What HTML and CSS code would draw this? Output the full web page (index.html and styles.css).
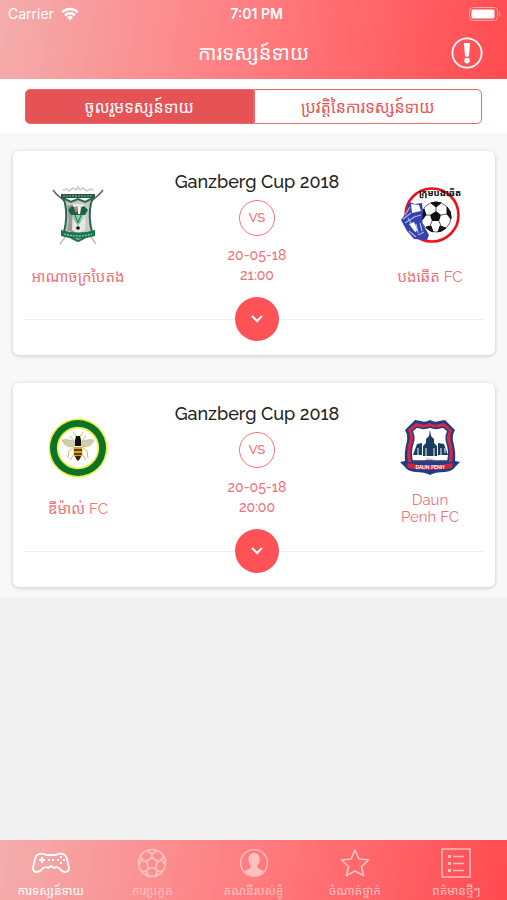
FILE: index.html
```
<!DOCTYPE html>
<html lang="km">
<head>
  <meta charset="UTF-8">
  <meta name="viewport" content="width=device-width, initial-scale=1.0">
  <title>ការទស្សន៍ទាយ</title>
  <link rel="stylesheet" href="styles.css">
</head>
<body>
  <header class="header">
    <div class="status-bar">
      <div class="status-left">
        <span>Carrier</span>
        <svg width="18" height="14" viewBox="0 0 18 14" fill="none" stroke="#fff" stroke-width="2.4">
          <path d="M1.2 5.2a11 11 0 0 1 15.6 0"/>
          <path d="M4 8.3a7 7 0 0 1 10 0"/>
          <path d="M9 13.4L6 10.3a4.3 4.3 0 0 1 6 0z" fill="#fff" stroke="none"/>
        </svg>
      </div>
      <span class="status-time">7:01 PM</span>
      <div class="status-right">
        <svg width="32" height="14" viewBox="0 0 32 14">
          <rect x="0.5" y="0.5" width="28" height="13" rx="3.5" fill="none" stroke="#fff" stroke-opacity="0.45"/>
          <rect x="2.5" y="2.5" width="23" height="9" rx="1.5" fill="#fff"/>
          <path d="M30 4.5a3 3 0 0 1 0 5z" fill="#fff" fill-opacity="0.5"/>
        </svg>
      </div>
    </div>
    <div class="title-bar">
      <h1>ការទស្សន៍ទាយ</h1>
      <button class="info-btn" aria-label="Info">
        <svg width="32" height="32" viewBox="0 0 32 32">
          <circle cx="16" cy="16" r="14.6" fill="none" stroke="#fff" stroke-width="1.8"/>
          <path d="M13 6h6l-1 13.5h-4z" fill="#fff"/>
          <circle cx="16" cy="23.6" r="2.8" fill="#fff"/>
        </svg>
      </button>
    </div>
  </header>

  <div class="segment-wrap">
    <div class="segment">
      <button class="segment-btn active">ចូលរួមទស្សន៍ទាយ</button>
      <button class="segment-btn">ប្រវត្តិនៃការទស្សន៍ទាយ</button>
    </div>
  </div>

  <main class="matches">
    <section class="card">
      <div class="match">
        <div class="team">
          <svg class="logo" viewBox="0 0 60 60">
            <path d="M5 4c4 6 8 8 13 12M55 4c-4 6-8 8-13 12" fill="none" stroke="#666" stroke-width="1.6"/>
            <path d="M18 50l-6 8M42 50l6 8" stroke="#bbb" stroke-width="1.3"/>
            <path d="M15 4l4-1 2 2 4-3 3 2 2-3 2 3 3-2 4 3 3-2 4 1" fill="none" stroke="#ccc" stroke-width="1.6"/>
            <path d="M15 12l2 5q3 14-1 29 8 7 14 9 6-2 14-9-4-15-1-29l2-5-8 4-7-3-7 3z" fill="#c8c8c8" stroke="#226b4c" stroke-width="2"/>
            <path d="M19 20q3 12 0 24l9 4V18z" fill="#999"/>
            <path d="M25 18h11q2 15 1 26l-7 4-6-4z" fill="#e6e6e6"/>
            <path d="M13 8h34v4H13z" fill="#27563f"/>
            <path d="M15 10h30" stroke="#8fb5a2" stroke-width="1" stroke-dasharray="2 1"/>
            <path d="M20 24l4-4 6 3 6-3 4 4-3 5H23z" fill="#176343"/>
            <path d="M24 29h12l-2 5-4 6-4-6z" fill="#8bc9aa"/>
            <path d="M27 29l3 8 3-8" fill="none" stroke="#217750"/>
            <path d="M26 22l3-2 2 3-3 4z" fill="#d77878"/>
            <path d="M30 20l3 2-1 6h-2z" fill="#fff"/>
            <circle cx="30" cy="42" r="1.8" fill="#111"/>
            <path d="M13 44q17 5 34 0v6q-17 5-34 0z" fill="#15754d"/>
            <path d="M16 48q14 4 28 0" fill="none" stroke="#9ec4b1" stroke-width="1.3" stroke-dasharray="2 1"/>
          </svg>
          <p class="team-name">អាណាចក្របៃតង</p>
        </div>
        <div class="info">
          <h2>Ganzberg Cup 2018</h2>
          <span class="vs">VS</span>
          <p class="date">20-05-18<br>21:00</p>
        </div>
        <div class="team">
          <svg class="logo" viewBox="0 0 60 60">
            <circle cx="32" cy="29" r="26.5" fill="#fff" stroke="#e8141c" stroke-width="2.6"/>
            <circle cx="36" cy="31" r="15" fill="#fff" stroke="#555" stroke-width="0.9"/>
            <path d="M36 25l5 4-2 6h-7l-2-6z" fill="#111"/>
            <path d="M31 17q5-2 10 0l-5 4zM47 21q5 5 4 12l-4-5zM46 42q-3 3-8 4l2-6zM33 46q-4-1-7-5l5-1zM22 34q-1-5 2-11l2 6z" fill="#111" stroke="#111"/>
            <path d="M36 21v4M41 29l6-1M39 35l2 5M32 35l-2 5M30 29h-4" stroke="#444" stroke-width="0.9"/>
            <path d="M9 16l6 2 7-1 1 9-1 11 7 12-2 5-13-1-7-8-6-11 5-7z" fill="#3542ad"/>
            <path d="M11 18l8 1 2 6-9 2zM9 38l5-2 4 8-3 2z" fill="#fff"/>
            <path d="M3 33l8-6M5 37l11-7M14 31l7-2M16 38l2 9M20 37l2 8M9 45l7 6M18 49l6-3M5 29l5-8M8 32l3 5" stroke="#a9b6f0" stroke-width="1.2"/>
            <text x="40" y="10" class="logo-khmer">ក្រុមបងឆើត</text>
          </svg>
          <p class="team-name">បងឆើត FC</p>
        </div>
      </div>
      <div class="expand">
        <button class="expand-btn" aria-label="Expand">
          <svg width="14" height="10" viewBox="0 0 14 10"><path d="M2 2l5 5 5-5" fill="none" stroke="#fff" stroke-width="2"/></svg>
        </button>
      </div>
    </section>

    <section class="card">
      <div class="match">
        <div class="team">
          <svg class="logo" viewBox="0 0 60 60">
            <circle cx="30" cy="30" r="29.4" fill="#f5ee32"/>
            <circle cx="30" cy="30" r="28" fill="#087329"/>
            <circle cx="30" cy="30" r="20.4" fill="#fff" stroke="#eee83d" stroke-width="1.6"/>
            <path d="M28 18l-3-4M32 18l3-4M26 29l-5 4-1 7M34 29l5 4 1 7M26 23l-4-5M34 23l4-5M27 35l-5 7M33 35l5 7" fill="none" stroke="#c7b64f" stroke-width="0.9"/>
            <path d="M28 24c-5-2-9-3-14-2 2 6 8 9 14 5zM32 24c5-2 9-3 14-2-2 6-8 9-14 5z" fill="#d1cfaa" stroke="#aaa97d" stroke-width="0.5"/>
            <path d="M28 18h4l1 4v6h-6v-6z" fill="#111"/>
            <path d="M26 29h8q2 9-4 14-6-5-4-14z" fill="#df9d24"/>
            <path d="M26 32h8M26 36h8M28 40h4" stroke="#382510" stroke-width="1.6"/>
            <path d="M27 38h6q-1 3-3 5-2-2-3-5z" fill="#36220f"/>
          </svg>
          <p class="team-name">ឌីម៉ាល់ FC</p>
        </div>
        <div class="info">
          <h2>Ganzberg Cup 2018</h2>
          <span class="vs">VS</span>
          <p class="date">20-05-18<br>20:00</p>
        </div>
        <div class="team">
          <svg class="logo" viewBox="0 0 60 60">
            <path d="M30 2q5 3 9 1l6-1 10 10q-3 5-2 11 3 11 2 20l5 1-5 5q-2 4-10 5-10 0-15 3-5-3-15-3-8-1-10-5l-5-5 5-1q-1-9 2-20 1-6-2-11l10-10 6 1q4 2 9-1z" fill="#203d83"/>
            <path d="M30 5q5 3 9 1l5-1 8 7q-3 6-1 12 3 10 1 20H8q-2-10 1-20 2-6-1-12l8-7 5 1q4 2 9-1z" fill="#d72743"/>
            <path d="M30 9q5 2 9 1l4-1 5 4q-3 6-1 12 3 8 1 18H12q-2-10 1-18 2-6-1-12l5-4 4 1q4 1 9-1z" fill="#fff" stroke="#203d83" stroke-width="1.6"/>
            <path d="M30 12l1 6 3 3v4l3 3v10H23V28l3-3v-4l3-3zM13 37l4-11 5-1v12zM38 25l6 1 4 11H38z" fill="#173e60"/>
            <path d="M26 30v8M34 30v8M18 30v7M41 30v7M45 30v5" stroke="#d2dae7" stroke-width="1.2"/>
            <text x="30" y="43" class="logo-year">2017</text>
            <path d="M7 45q23 5 46 0l-1 5q-22 4-44 0z" fill="#cf2542"/>
            <text x="30" y="51" class="logo-banner">DAUN PENH</text>
          </svg>
          <p class="team-name">Daun<br>Penh FC</p>
        </div>
      </div>
      <div class="expand">
        <button class="expand-btn" aria-label="Expand">
          <svg width="14" height="10" viewBox="0 0 14 10"><path d="M2 2l5 5 5-5" fill="none" stroke="#fff" stroke-width="2"/></svg>
        </button>
      </div>
    </section>
  </main>

  <nav class="tabs">
    <a href="#" class="tab active">
      <svg width="40" height="30" viewBox="0 0 40 30" fill="none" stroke="currentColor" stroke-width="1.8" stroke-linejoin="round">
        <path d="M8 6q5-1 7 1h10q2-2 7-1 3 1 4 5l2 9q0 4-4 4-3 0-6-4l-3-1-2 1-3-2-3 2-2-1-3 1q-3 4-6 4-4 0-4-4l2-9q1-4 4-5z"/>
        <path d="M11 9v6M8 12h6" stroke-width="2.2"/>
        <path d="M17 12h2M21 12h2"/>
        <path d="M30 8v2M30 14v2M26 12h2M32 12h2" stroke-width="2"/>
      </svg>
      <span>ការទស្សន៍ទាយ</span>
    </a>
    <a href="#" class="tab">
      <svg width="30" height="30" viewBox="0 0 30 30" fill="none" stroke="currentColor" stroke-width="1.7" stroke-linejoin="round">
        <circle cx="15" cy="15" r="13.5"/>
        <path d="M15 9.5l5.5 4-2 6.5h-7l-2-6.5z"/>
        <path d="M15 9.5V6M20.5 13.5l4-1.5M18.5 20l2 3.5M11.5 20l-2 3.5M9.5 13.5l-4-1.5"/>
        <path d="M10 2.5L15 6l5-3.5M26.5 8l-2 4 3.500 4M25 23l-4.500.5-2.500 4.500M12 28l-2.500-4.500L5 23M2 16l3.500-4-2-4"/>
      </svg>
      <span>ការប្រកួត</span>
    </a>
    <a href="#" class="tab">
      <svg width="30" height="30" viewBox="0 0 30 30">
        <circle cx="15" cy="15" r="13.4" fill="none" stroke="currentColor" stroke-width="1.4"/>
        <path d="M15 5c4 0 6 3 5.5 7 0 3-1 4-2 5.500v2c1 2 4 2 6 3.500q-4 5-9.500 5t-9.500-5c2-1.500 5-1.500 6-3.500v-2c-1-1.500-2-2.500-2-5.500C9 8 11 5 15 5z" fill="currentColor"/>
      </svg>
      <span>គណនីរបស់ខ្ញុំ</span>
    </a>
    <a href="#" class="tab">
      <svg width="30" height="30" viewBox="0 0 30 30" fill="none" stroke="currentColor" stroke-width="1.7" stroke-linejoin="round">
        <path d="M15 2l4 9 9.500 1-7 6.500 2 9-8.500-4.500L6.500 27.500l2-9-7-6.500L11 11z"/>
      </svg>
      <span>ចំណាត់ថ្នាក់</span>
    </a>
    <a href="#" class="tab">
      <svg width="30" height="30" viewBox="0 0 30 30" fill="none" stroke="currentColor" stroke-width="1.4">
        <rect x="1" y="1" width="28" height="28"/>
        <path d="M12 8.5h11M12 15.500h11M12 22.500h11"/>
        <path d="M7 8.5h3M7 15.500h3M7 22.500h3" stroke-width="3"/>
      </svg>
      <span>ពត៌មានថ្មីៗ</span>
    </a>
  </nav>
</body>
</html>
```
FILE: styles.css
```
* {
  box-sizing: border-box;
}
body {
  margin: 0;
  min-height: 100vh;
  display: flex;
  flex-direction: column;
  background-color: #f0f0f0;
  font-family: Raleway, Lato, "Noto Sans Khmer", "Khmer OS", sans-serif;
}
h1, h2, p {
  margin: 0;
  font-weight: normal;
}
button {
  font-family: inherit;
  padding: 0;
  border: none;
  background: none;
  cursor: pointer;
}
svg {
  display: block;
  flex-shrink: 0;
}
.header, .tabs {
  background: linear-gradient(100deg, #f4adad 0%, #ff7e81 48%, #ff4b50 100%);
}
.header {
  color: white;
}
.status-bar {
  display: grid;
  grid-template-columns: 1fr auto 1fr;
  align-items: center;
  height: 26px;
  padding: 1px 6px 0 8px;
  font-family: Inter, sans-serif;
  font-size: 14px;
}
.status-left {
  display: flex;
  align-items: center;
  gap: 7px;
}
.status-time {
  padding-left: 4px;
  font-weight: 600;
}
.status-right {
  justify-self: end;
}
.title-bar {
  display: grid;
  grid-template-columns: 1fr auto 1fr;
  align-items: center;
  height: 53px;
  padding: 0 24px;
}
.title-bar h1 {
  grid-column: 2;
  font-size: 20px;
  line-height: 32px;
}
.info-btn {
  justify-self: end;
}
.segment-wrap {
  background-color: white;
  padding: 10px 25px 9px;
}
.segment {
  display: flex;
  height: 35px;
}
.segment-btn {
  flex: 1;
  border: 1px solid #e8686c;
  border-radius: 0 5px 5px 0;
  color: #e65357;
  font-size: 16px;
}
.segment-btn.active {
  border-radius: 5px 0 0 5px;
  background-color: #e65357;
  color: white;
}
.matches {
  display: flex;
  flex-direction: column;
  gap: 28px;
  padding: 18px 12px 11px 13px;
  background-color: #f8f8f8;
}
.card {
  padding: 19px 11px 14px;
  background-color: white;
  border-radius: 6px;
  box-shadow: 0 1px 4px rgba(0, 0, 0, 0.2);
}
.match {
  display: grid;
  grid-template-columns: 108px 1fr 108px;
}
.team {
  display: flex;
  flex-direction: column;
  align-items: center;
  padding-top: 16px;
}
.logo {
  width: 60px;
  height: 60px;
  overflow: visible;
}
.logo-khmer {
  font-size: 9px;
  font-weight: bold;
  text-anchor: middle;
}
.logo-year {
  font-size: 4px;
  text-anchor: middle;
}
.logo-banner {
  font-size: 5px;
  font-weight: bold;
  text-anchor: middle;
  fill: white;
}
.team-name {
  display: flex;
  align-items: center;
  height: 34px;
  margin-top: 14px;
  color: #ed7377;
  font-size: 15px;
  line-height: 17px;
  text-align: center;
  white-space: nowrap;
}
.info {
  display: flex;
  flex-direction: column;
  align-items: center;
  padding-left: 6px;
}
.info h2 {
  color: #222;
  font-size: 18px;
  font-weight: 500;
  line-height: 24px;
  white-space: nowrap;
}
.vs {
  width: 36px;
  height: 36px;
  margin-top: 6px;
  border: 1px solid #ff6e72;
  border-radius: 50%;
  color: #ed7377;
  font-size: 13px;
  font-weight: 500;
  line-height: 34px;
  text-align: center;
}
.date {
  margin-top: 9px;
  color: #ed7377;
  font-size: 14px;
  font-weight: 500;
  line-height: 20px;
  text-align: center;
}
.expand {
  display: flex;
  align-items: center;
  margin-top: 3px;
}
.expand::before, .expand::after {
  content: "";
  flex: 1 1 0;
  height: 1px;
  background-color: #eee;
}
.expand::before {
  flex-basis: 6px;
}
.expand-btn {
  display: flex;
  align-items: center;
  justify-content: center;
  width: 44px;
  height: 44px;
  border-radius: 50%;
  background-color: #ff5257;
}
.tabs {
  display: flex;
  height: 60px;
  margin-top: auto;
  padding-top: 8px;
}
.tab {
  flex: 1;
  display: flex;
  flex-direction: column;
  align-items: center;
  color: #ffc0c0;
  font-size: 12px;
  line-height: 26px;
  text-decoration: none;
  white-space: nowrap;
}
.tab.active {
  color: white;
}
```
